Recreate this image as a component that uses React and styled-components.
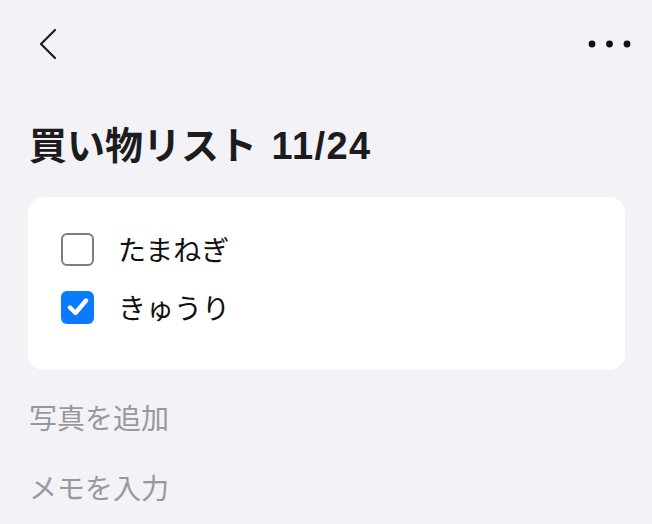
import React from 'react'
import styled, { createGlobalStyle } from 'styled-components'

const GlobalStyle = createGlobalStyle`
  html, body {
    margin: 0;
    padding: 0;
    background: #f2f2f7;
  }
  body {
    font-family: "Liberation Sans", "Noto Sans CJK JP", sans-serif;
    color: #1c1c1e;
  }
`

const Page = styled.main`
  width: 652px;
  min-height: 524px;
  background: #f2f2f7;
`

const Header = styled.header`
  height: 88px;
  display: flex;
  align-items: center;
  justify-content: space-between;
  padding: 0 20px 0 38px;
`

const IconButton = styled.button`
  border: none;
  background: none;
  padding: 0;
  display: flex;
  align-items: center;
  cursor: pointer;
`

const Title = styled.h1`
  margin: 35px 0 0 29px;
  font-size: 38px;
  line-height: 46px;
  font-weight: 700;
  color: #1c1c1e;
`

const DateLabel = styled.span`
  margin-left: 4px;
  letter-spacing: 1.4px;
`

const Card = styled.section`
  margin: 28px 27px 0 28px;
  padding: 23px 33px 34px;
  background: #ffffff;
  border-radius: 16px;
`

const ItemRow = styled.label`
  height: 58px;
  display: flex;
  align-items: center;
  gap: 24px;
  font-size: 28px;
  color: #111;
`

const Box = styled.span`
  box-sizing: border-box;
  width: 33px;
  height: 33px;
  border-radius: 6px;
  display: flex;
  align-items: center;
  justify-content: center;
  border: ${(p) => (p.$checked ? 'none' : '2.5px solid #7d7d7d')};
  background: ${(p) => (p.$checked ? '#0a7aff' : '#fff')};
`

const Field = styled.div`
  height: 70px;
  display: flex;
  align-items: center;
  padding-left: 29px;
  font-size: 28px;
  color: #98989d;
`

const Fields = styled.div`
  margin-top: 12px;
`

function Checkbox({ checked }) {
  return (
    <Box $checked={checked}>
      {checked && (
        <svg width="22" height="20" viewBox="0 0 22 20">
          <path
            d="M3 10.5 L8.5 16 L19 3.5"
            fill="none"
            stroke="#fff"
            strokeWidth="4.4"
            strokeLinecap="round"
            strokeLinejoin="round"
          />
        </svg>
      )}
    </Box>
  )
}

const items = [
  { name: 'たまねぎ', done: false },
  { name: 'きゅうり', done: true },
]

export default function App() {
  return (
    <Page>
      <GlobalStyle />
      <Header>
        <IconButton aria-label="戻る">
          <svg width="20" height="32" viewBox="0 0 20 32">
            <path
              d="M17 2 L3 16 L17 30"
              fill="none"
              stroke="#1c1c1e"
              strokeWidth="2.2"
              strokeLinecap="round"
              strokeLinejoin="round"
            />
          </svg>
        </IconButton>
        <IconButton aria-label="その他">
          <svg width="44" height="10" viewBox="0 0 44 10">
            <circle cx="4" cy="5" r="3.4" fill="#111" />
            <circle cx="21.5" cy="5" r="3.4" fill="#111" />
            <circle cx="39" cy="5" r="3.4" fill="#111" />
          </svg>
        </IconButton>
      </Header>
      <Title>
        買い物リスト <DateLabel>11/24</DateLabel>
      </Title>
      <Card>
        {items.map((item) => (
          <ItemRow key={item.name}>
            <Checkbox checked={item.done} />
            <span>{item.name}</span>
          </ItemRow>
        ))}
      </Card>
      <Fields>
        <Field>写真を追加</Field>
        <Field>メモを入力</Field>
      </Fields>
    </Page>
  )
}
